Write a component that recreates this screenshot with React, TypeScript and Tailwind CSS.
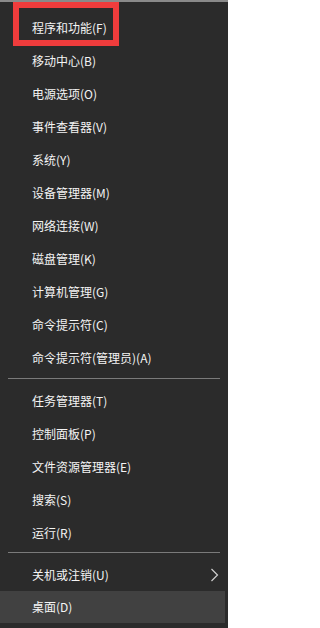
const GROUPS: string[][] = [
  [
    '程序和功能(F)',
    '移动中心(B)',
    '电源选项(O)',
    '事件查看器(V)',
    '系统(Y)',
    '设备管理器(M)',
    '网络连接(W)',
    '磁盘管理(K)',
    '计算机管理(G)',
    '命令提示符(C)',
    '命令提示符(管理员)(A)',
  ],
  ['任务管理器(T)', '控制面板(P)', '文件资源管理器(E)', '搜索(S)', '运行(R)'],
];

const FONT = { fontFamily: '"Microsoft YaHei", "Noto Sans CJK SC", "Noto Sans", sans-serif' };

function Row({ label, active, submenu }: { label: string; active?: boolean; submenu?: boolean }) {
  return (
    <div
      className={
        'flex items-center justify-between pl-[32px] pr-[9px] text-[12px] text-[#f4f4f4] ' +
        (active ? 'h-[32px] w-[225px] bg-[#414141]' : 'h-[33px]')
      }
    >
      <span className="leading-none">{label}</span>
      {submenu && (
        <svg width="9" height="14" viewBox="0 0 9 14" className="text-[#d0d0d0]">
          <polyline points="1.5,1 7.5,7 1.5,13" fill="none" stroke="currentColor" strokeWidth="1.2" />
        </svg>
      )}
    </div>
  );
}

function Separator({ top, bottom }: { top: string; bottom: string }) {
  return <div className={`mx-[8px] h-px bg-[#7a7a7a] ${top} ${bottom}`} />;
}

export default function App() {
  return (
    <div className="relative h-[628px] w-[228px] overflow-hidden bg-[#2b2b2b]" style={FONT}>
      <div className="h-[2px] w-full bg-[#8a8a8a]" />
      <div className="pt-[9px]">
        {GROUPS[0].map((g) => (
          <Row key={g} label={g} />
        ))}
      </div>
      <Separator top="mt-[4px]" bottom="mb-[5px]" />
      <div>
        {GROUPS[1].map((g) => (
          <Row key={g} label={g} />
        ))}
      </div>
      <Separator top="mt-[3px]" bottom="mb-[5px]" />
      <Row label="关机或注销(U)" submenu />
      <Row label="桌面(D)" active />

      {/* red highlight annotation */}
      <div className="absolute left-[13px] top-[2px] h-[44px] w-[106px] border-[6px] border-[#ef3c3c]" />
    </div>
  );
}
